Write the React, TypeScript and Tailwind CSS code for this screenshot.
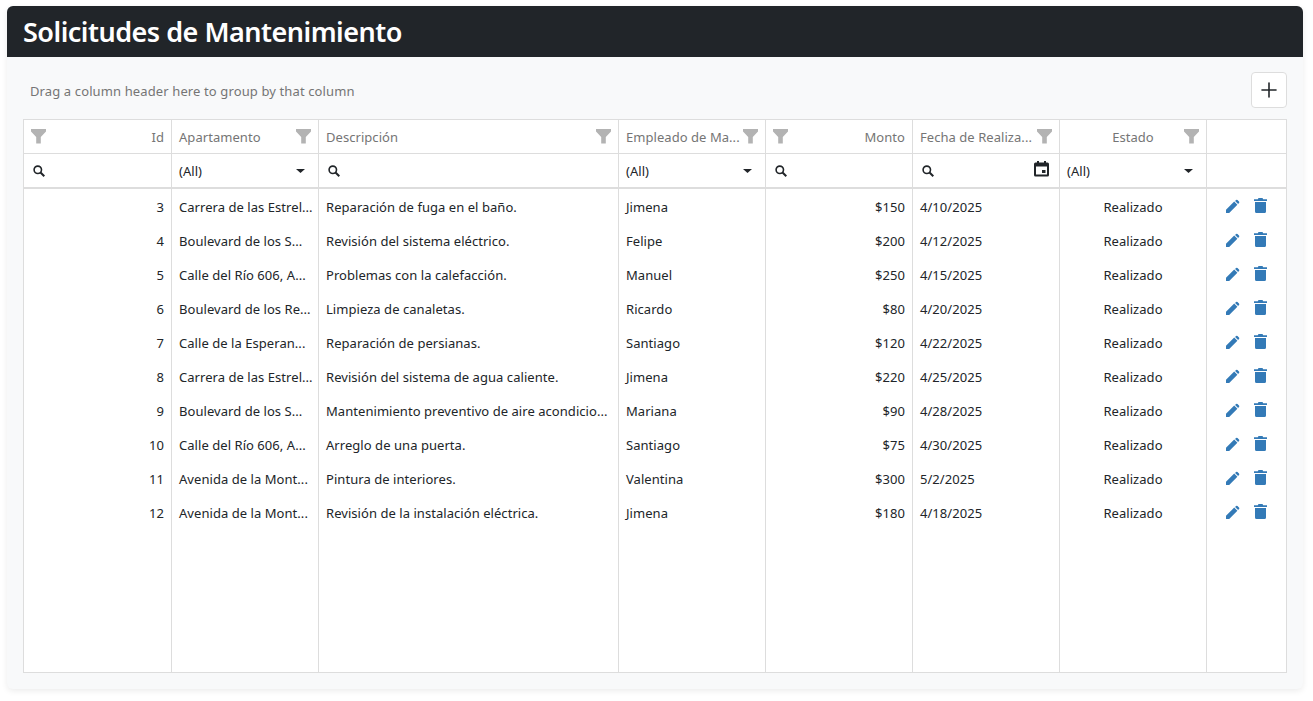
import { Plus } from "lucide-react";

const rows = [
  { id: 3, apt: "Carrera de las Estrel...", desc: "Reparación de fuga en el baño.", emp: "Jimena", monto: "$150", fecha: "4/10/2025" },
  { id: 4, apt: "Boulevard de los S...", desc: "Revisión del sistema eléctrico.", emp: "Felipe", monto: "$200", fecha: "4/12/2025" },
  { id: 5, apt: "Calle del Río 606, A...", desc: "Problemas con la calefacción.", emp: "Manuel", monto: "$250", fecha: "4/15/2025" },
  { id: 6, apt: "Boulevard de los Re...", desc: "Limpieza de canaletas.", emp: "Ricardo", monto: "$80", fecha: "4/20/2025" },
  { id: 7, apt: "Calle de la Esperan...", desc: "Reparación de persianas.", emp: "Santiago", monto: "$120", fecha: "4/22/2025" },
  { id: 8, apt: "Carrera de las Estrel...", desc: "Revisión del sistema de agua caliente.", emp: "Jimena", monto: "$220", fecha: "4/25/2025" },
  { id: 9, apt: "Boulevard de los S...", desc: "Mantenimiento preventivo de aire acondicio...", emp: "Mariana", monto: "$90", fecha: "4/28/2025" },
  { id: 10, apt: "Calle del Río 606, A...", desc: "Arreglo de una puerta.", emp: "Santiago", monto: "$75", fecha: "4/30/2025" },
  { id: 11, apt: "Avenida de la Mont...", desc: "Pintura de interiores.", emp: "Valentina", monto: "$300", fecha: "5/2/2025" },
  { id: 12, apt: "Avenida de la Mont...", desc: "Revisión de la instalación eléctrica.", emp: "Jimena", monto: "$180", fecha: "4/18/2025" },
];

const COLS = "grid grid-cols-[148px_147px_300px_147px_147px_147px_147px_79px]";

function Funnel() {
  return (
    <svg width="15" height="15" viewBox="0 0 15 15" className="shrink-0">
      <path d="M0 0h15v2.500L9.800 8v6.500H5.200V8L0 2.500z" fill="#b3b3b3" />
    </svg>
  );
}

function SearchIcon() {
  return (
    <svg width="14" height="14" viewBox="0 0 14 14" fill="none" stroke="#212529" strokeWidth="1.6" className="shrink-0">
      <circle cx="5.800" cy="5.800" r="3.700" />
      <path d="M8.500 8.500l3.800 3.800" strokeWidth="2" />
    </svg>
  );
}

function Caret() {
  return (
    <svg width="9" height="4" viewBox="0 0 9 4" className="shrink-0">
      <path d="M0 0h9L4.500 4z" fill="#212529" />
    </svg>
  );
}

function Calendar() {
  return (
    <svg width="15" height="16" viewBox="0 0 15 16" className="mb-[3px] shrink-0">
      <path d="M3 0h2v1.500h5V0h2v1.500h1.500a1.500 1.500 0 0 1 1.500 1.500V14a1.500 1.500 0 0 1-1.500 1.500h-12A1.500 1.500 0 0 1 0 14V3a1.500 1.500 0 0 1 1.500-1.500H3zM2 5.500V13.500h11V5.500zM8 9h3.500v3H8z" fill="#212529" fillRule="evenodd" />
    </svg>
  );
}

function Pencil() {
  return (
    <svg width="14" height="14" viewBox="0 0 14 14" className="shrink-0">
      <path d="M0 14v-3.200L8.200 2.600l3.200 3.200L3.200 14zM10 1a1.100 1.100 0 0 1 1.500 0l1.500 1.500a1.100 1.100 0 0 1 0 1.500l-.9.900L9.100 1.900z" fill="#337ab7" />
    </svg>
  );
}

function Trash() {
  return (
    <svg width="13" height="15" viewBox="0 0 13 15" className="shrink-0">
      <path d="M4.500 0h4l.700 1.200H13v1.800H0V1.200h3.800zM1 4h11v9.500a1.500 1.500 0 0 1-1.500 1.500h-8A1.500 1.500 0 0 1 1 13.500z" fill="#337ab7" />
    </svg>
  );
}

function HeaderCell({ label, align = "left", filterLeft = false, last = false }: { label?: string; align?: "left" | "right" | "center"; filterLeft?: boolean; last?: boolean }) {
  const alignClass = align === "right" ? "text-right" : align === "center" ? "pl-[19px] text-center" : "text-left";
  return (
    <div className={`flex items-center gap-1 pl-[7px] pr-[7px] text-[#757575] ${last ? "" : "border-r border-[#dddddd]"}`}>
      {filterLeft && label && <Funnel />}
      {label && <span className={`min-w-0 flex-1 whitespace-nowrap pt-[2px] ${alignClass}`}>{label}</span>}
      {!filterLeft && label && <Funnel />}
    </div>
  );
}

function FilterSearch({ calendar = false }: { calendar?: boolean }) {
  return (
    <div className="flex items-center justify-between border-r border-[#dddddd] pl-[8px] pr-[10px]">
      <SearchIcon />
      {calendar && <Calendar />}
    </div>
  );
}

function FilterSelect() {
  return (
    <div className="flex items-center justify-between border-r border-[#dddddd] pl-[7px] pr-[13px]">
      <span className="pt-[2px]">(All)</span>
      <Caret />
    </div>
  );
}

function Cell({ children, className = "" }: { children?: React.ReactNode; className?: string }) {
  return <div className={`whitespace-nowrap border-r border-[#dddddd] px-[7px] ${className}`}>{children}</div>;
}

export default function App() {
  return (
    <div className="min-h-screen bg-white pl-[7px] pr-[10px] pt-[6px] font-['Noto_Sans','Open_Sans',sans-serif] text-[13px] tracking-[0.05px] text-[#212529]">
      <div className="flex h-[683px] flex-col overflow-hidden rounded-md bg-[#f8f9fa] shadow-[0_2px_6px_rgba(0,0,0,0.08)]">
        {/* Title */}
        <div className="flex h-[51px] shrink-0 items-center bg-[#212529] px-4">
          <h1 className="text-[27px] font-semibold leading-none tracking-[-0.5px] text-white">Solicitudes de Mantenimiento</h1>
        </div>

        <div className="flex min-h-0 flex-1 flex-col px-4 pb-4">
          {/* Toolbar */}
          <div className="flex h-[62px] shrink-0 items-center justify-between pb-[6px] pt-[10px]">
            <span className="pl-[7px] pt-[4px] tracking-[0.12px] text-[#757575]">Drag a column header here to group by that column</span>
            <button className="flex h-[36px] w-[36px] items-center justify-center rounded border border-[#dddddd] bg-white">
              <Plus size={24} strokeWidth={1.6} color="#212529" />
            </button>
          </div>

          {/* Grid */}
          <div className="flex min-h-0 flex-1 flex-col border border-[#dddddd] bg-white">
            <div className={`${COLS} h-[34px] shrink-0 border-b border-[#dddddd]`}>
              <HeaderCell label="Id" align="right" filterLeft />
              <HeaderCell label="Apartamento" />
              <HeaderCell label="Descripción" />
              <HeaderCell label="Empleado de Ma..." />
              <HeaderCell label="Monto" align="right" filterLeft />
              <HeaderCell label="Fecha de Realiza..." />
              <HeaderCell label="Estado" align="center" />
              <HeaderCell last />
            </div>
            <div className={`${COLS} h-[35px] shrink-0 border-b-2 border-[#dddddd]`}>
              <FilterSearch />
              <FilterSelect />
              <FilterSearch />
              <FilterSelect />
              <FilterSearch />
              <FilterSearch calendar />
              <FilterSelect />
              <div />
            </div>

            {rows.map((r) => (
              <div key={r.id} className={`${COLS} h-[34px] shrink-0 leading-[36px]`}>
                <Cell className="text-right">{r.id}</Cell>
                <Cell>{r.apt}</Cell>
                <Cell>{r.desc}</Cell>
                <Cell>{r.emp}</Cell>
                <Cell className="text-right">{r.monto}</Cell>
                <Cell>{r.fecha}</Cell>
                <Cell className="text-center">Realizado</Cell>
                <div className="flex items-center justify-center gap-[14px] pb-[3px] pr-[1px]">
                  <Pencil />
                  <Trash />
                </div>
              </div>
            ))}

            {/* Empty area keeps the column lines running */}
            <div className={`${COLS} min-h-0 flex-1`}>
              <Cell />
              <Cell />
              <Cell />
              <Cell />
              <Cell />
              <Cell />
              <Cell />
              <div />
            </div>
          </div>
        </div>
      </div>
    </div>
  );
}
